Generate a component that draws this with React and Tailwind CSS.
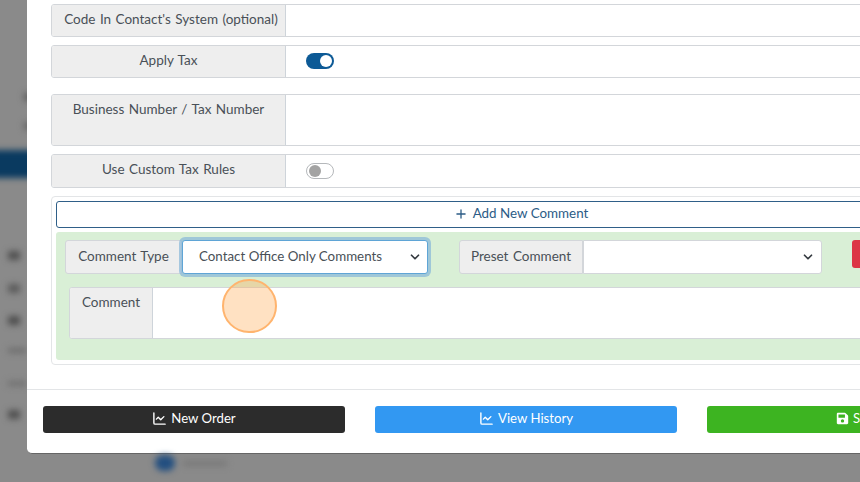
import React from 'react';
import { ChartLine, ChevronDown, Plus } from 'lucide-react';
import { FaSave } from 'react-icons/fa';

const Label = ({ children, className = '' }) => (
  <div className={`w-[234px] shrink-0 bg-[#eeeeee] border-r border-[#ced4da] text-center text-[13.5px] [word-spacing:1px] text-[#495057] ${className}`}>
    {children}
  </div>
);

const Row = ({ label, children, className = '', labelClass = 'pt-[4px]' }) => (
  <div className={`flex w-[1060px] bg-white border border-[#d3d6da] rounded-[3px] overflow-hidden ${className}`}>
    <Label className={labelClass}>{label}</Label>
    <div className="flex-1 flex items-center pl-5">{children}</div>
  </div>
);

const Toggle = ({ on }) =>
  on ? (
    <div className="w-[28px] h-[16px] mb-[1px] rounded-full bg-[#0d5a96] flex items-center justify-end pr-[2px]">
      <div className="w-[12px] h-[12px] rounded-full bg-white"></div>
    </div>
  ) : (
    <div className="w-[28px] h-[16px] rounded-full bg-white border border-[#b5b8bb] flex items-center pl-[2px]">
      <div className="w-[12px] h-[12px] rounded-full bg-[#a3a3a3]"></div>
    </div>
  );

const FooterButton = ({ color, children }) => (
  <div className={`w-[302px] h-[27px] shrink-0 rounded-[3px] flex items-center justify-center gap-1 pb-[2px] text-white text-[13.2px] ${color}`}>
    {children}
  </div>
);

const Strip = () => (
  <div className="w-[27px] shrink-0 h-full bg-[#8a8a8a] flex flex-col overflow-hidden">
    <div className="h-[93px] shrink-0"></div>
    <div className="ml-[24px] w-[8px] h-[8px] shrink-0 bg-[#5c5c5c] blur-[3px]"></div>
    <div className="h-[21px] shrink-0"></div>
    <div className="ml-[24px] w-[8px] h-[8px] shrink-0 bg-[#666666] blur-[3px]"></div>
    <div className="h-[20px] shrink-0"></div>
    <div className="-ml-[8px] w-[44px] h-[28px] shrink-0 bg-[#0a3a60] blur-[3px]"></div>
    <div className="h-[73px] shrink-0"></div>
    <div className="ml-[8px] w-[12px] h-[9px] shrink-0 bg-[#505050] blur-[3px]"></div>
    <div className="h-[24px] shrink-0"></div>
    <div className="ml-[8px] w-[12px] h-[9px] shrink-0 bg-[#5c5c5c] blur-[3px]"></div>
    <div className="h-[23px] shrink-0"></div>
    <div className="ml-[8px] w-[12px] h-[9px] shrink-0 bg-[#4e4e4e] blur-[3px]"></div>
    <div className="h-[23px] shrink-0"></div>
    <div className="ml-[8px] w-[18px] h-[5px] shrink-0 bg-[#6c6c6c] blur-[3px]"></div>
    <div className="h-[28px] shrink-0"></div>
    <div className="ml-[8px] w-[18px] h-[5px] shrink-0 bg-[#707070] blur-[3px]"></div>
    <div className="h-[24px] shrink-0"></div>
    <div className="ml-[8px] w-[12px] h-[9px] shrink-0 bg-[#505050] blur-[3px]"></div>
  </div>
);

export default function App() {
  return (
    <div
      className="relative w-[860px] h-[482px] overflow-hidden flex bg-[#8a8a8a]"
      style={{ fontFamily: 'Lato, sans-serif' }}
    >
      <Strip />

      {/* blurred toggle under the modal */}
      <div className="absolute left-[155px] top-[455px] flex items-center gap-2 blur-[3px]">
        <div className="w-[20px] h-[16px] rounded-full bg-[#234f80]"></div>
        <div className="w-[44px] h-[5px] bg-[#777777]"></div>
      </div>

      <div className="w-[1100px] shrink-0 h-[454px] bg-white rounded-bl-[5px] border-b border-[#666666] flex flex-col">
        <div className="h-[389px] shrink-0 pl-6 pt-1 flex flex-col">
          <Row label="Code In Contact's System (optional)" className="h-[33px]" labelClass="pt-[4px] pl-[5px]" />
          <Row label="Apply Tax" className="h-[33px] mt-2">
            <Toggle on />
          </Row>
          <Row label="Business Number / Tax Number" className="h-[52px] mt-4">
          </Row>
          <Row label="Use Custom Tax Rules" className="h-[34px] mt-2">
            <Toggle />
          </Row>

          <div className="w-[1060px] h-[169px] mt-2 border border-[#e3e5e7] rounded-[4px] p-1">
            <div className="h-[27px] pb-[2px] border border-[#2f5f88] rounded-[3px] flex items-center justify-center gap-[5px] text-[13.4px] text-[#2c5c86] w-[930px]">
              <Plus size={14} strokeWidth={2.25} />
              <span>Add New Comment</span>
            </div>

            <div className="h-[128px] mt-[4px] bg-[#d9efd6] rounded-[3px] pt-2 pl-[9px] flex flex-col">
              <div className="flex items-start">
                <div className="flex w-[363px] h-[34px] shrink-0">
                  <div className="w-[117px] shrink-0 bg-[#eeeeee] border border-[#d3d6da] rounded-l-[3px] text-center text-[13.5px] [word-spacing:1px] text-[#495057] pt-[5px]">
                    Comment Type
                  </div>
                  <div className="flex-1 flex items-center justify-between pl-[16px] pr-[5px] bg-white border border-[#5fa5d6] rounded-[3px] ring-[3px] ring-[#86b7d8]/70 text-[13.33px] text-[#495057]">
                    <span>Contact Office Only Comments</span>
                    <ChevronDown size={14} strokeWidth={3} className="text-[#343a40]" />
                  </div>
                </div>

                <div className="flex w-[363px] h-[34px] shrink-0 ml-[31px]">
                  <div className="w-[124px] shrink-0 bg-[#eeeeee] border border-[#d3d6da] rounded-l-[3px] text-center text-[13.5px] [word-spacing:1px] text-[#495057] pt-[5px]">
                    Preset Comment
                  </div>
                  <div className="flex-1 flex items-center justify-end pr-[6px] bg-white border border-[#d3d6da] rounded-r-[3px]">
                    <ChevronDown size={14} strokeWidth={3} className="text-[#343a40]" />
                  </div>
                </div>

                <div className="w-[40px] h-[28px] ml-[30px] bg-[#dc3545] rounded-[3px]"></div>
              </div>

              <div className="flex w-[960px] h-[52px] mt-[13px] ml-1 bg-white border border-[#d3d6da] rounded-[3px] overflow-hidden">
                <div className="w-[83px] shrink-0 bg-[#eeeeee] border-r border-[#ced4da] text-center text-[13.5px] text-[#495057] pt-[4px]">
                  Comment
                </div>
                <div className="flex-1"></div>
              </div>
            </div>
          </div>
        </div>

        <div className="flex-1 border-t border-[#e3e5e7] pl-4 pt-4 flex gap-[30px]">
          <FooterButton color="bg-[#2c2c2c]">
            <ChartLine size={15} strokeWidth={2.25} />
            <span>New Order</span>
          </FooterButton>
          <FooterButton color="bg-[#3298f2]">
            <ChartLine size={15} strokeWidth={2.25} />
            <span>View History</span>
          </FooterButton>
          <FooterButton color="bg-[#3db421]">
            <FaSave size={13} />
            <span>Save</span>
          </FooterButton>
        </div>
      </div>

      {/* click marker */}
      <div className="absolute left-[222px] top-[279px] w-[55px] h-[54px] rounded-full bg-[#ffa850]/35 border-2 border-[#ffb46e]"></div>
    </div>
  );
}
